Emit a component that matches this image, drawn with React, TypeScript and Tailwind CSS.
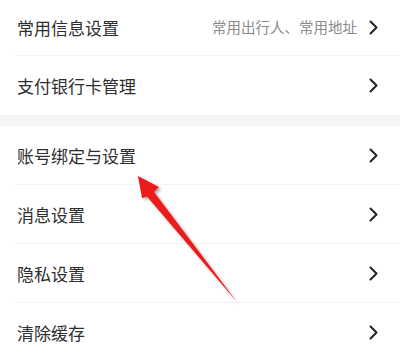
import React from 'react';

type Item = { title: string; hint?: string; divider?: boolean; height: string };

const groups: Item[][] = [
  [
    { title: '常用信息设置', hint: '常用出行人、常用地址', divider: true, height: 'h-[56px]' },
    { title: '支付银行卡管理', height: 'h-[59px]' },
  ],
  [
    { title: '账号绑定与设置', divider: true, height: 'h-[59px]' },
    { title: '消息设置', divider: true, height: 'h-[59px]' },
    { title: '隐私设置', divider: true, height: 'h-[59px]' },
    { title: '清除缓存', height: 'h-[59px]' },
  ],
];

function Chevron() {
  return (
    <svg width="9" height="15" viewBox="0 0 9 15" fill="none" className="shrink-0">
      <path d="M1.5 1.5 L7.5 7.5 L1.5 13.5" stroke="#222" strokeWidth="2" strokeLinecap="round" strokeLinejoin="round" />
    </svg>
  );
}

function Row({ item }: { item: Item }) {
  return (
    <div className={`${item.height} ml-[15px] flex items-center pl-[2px] pr-[22px] ${item.divider ? 'border-b border-[#f3f3f3]' : ''}`}>
      <span className="flex-1 text-[17px] leading-none text-[#2e2e2e]">{item.title}</span>
      {item.hint && (
        <span className="mr-[12px] text-[14.5px] leading-none text-[#8a8a8a]">{item.hint}</span>
      )}
      <Chevron />
    </div>
  );
}

// 红色指示箭头，盖在列表上
function RedArrow() {
  return (
    <svg className="pointer-events-none absolute left-0 top-0" width="400" height="355" viewBox="0 0 400 355">
      <defs>
        <filter id="sh" x="-20%" y="-20%" width="140%" height="140%">
          <feDropShadow dx="2" dy="2" stdDeviation="1.6" floodColor="#000" floodOpacity="0.35" />
        </filter>
      </defs>
      <polygon
        points="138,176 159,187 154,192 237,302 147,196.5 142,198"
        fill="#ec1a1f"
        filter="url(#sh)"
      />
    </svg>
  );
}

export default function App() {
  return (
    <div className="relative h-[355px] w-[400px] overflow-hidden bg-white" style={{ fontFamily: '"Noto Sans CJK SC", "Noto Sans", sans-serif' }}>
      {groups.map((group, gi) => (
        <div key={gi}>
          {gi > 0 && <div className="h-[11px] bg-[#f5f5f5]" />}
          {group.map((item) => (
            <Row key={item.title} item={item} />
          ))}
        </div>
      ))}
      <RedArrow />
    </div>
  );
}
